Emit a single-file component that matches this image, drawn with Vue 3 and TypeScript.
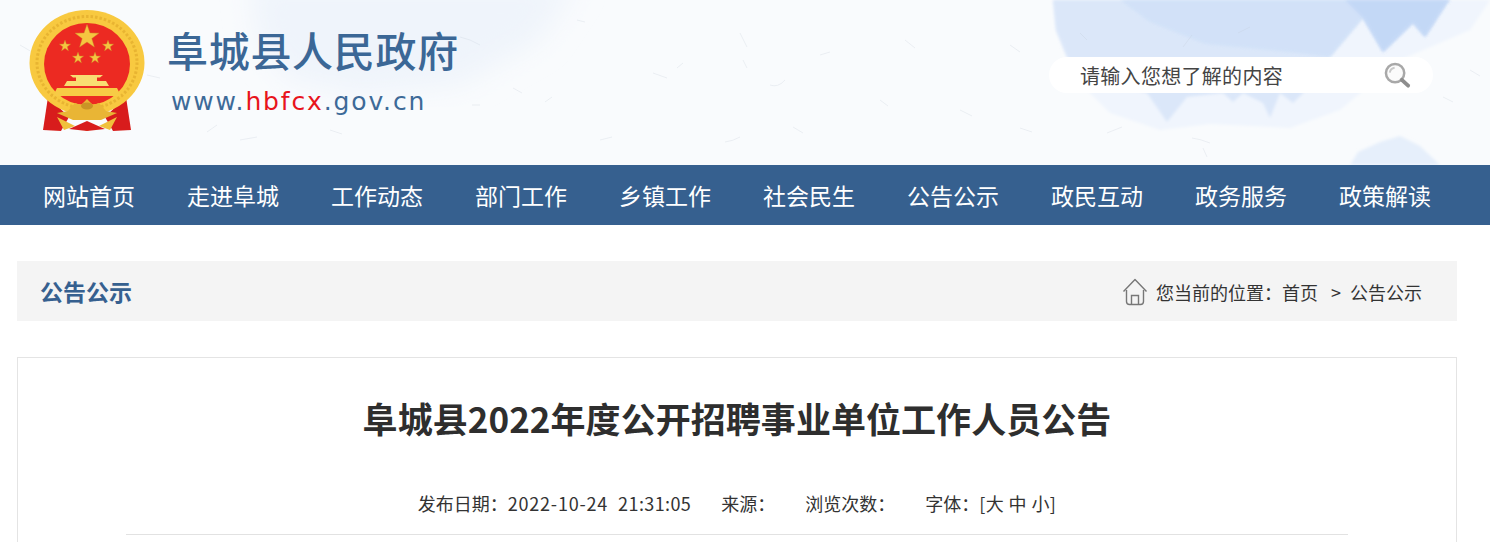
<script setup lang="ts">
const navItems = ['网站首页', '走进阜城', '工作动态', '部门工作', '乡镇工作', '社会民生', '公告公示', '政民互动', '政务服务', '政策解读']

// small gold stars of the emblem: [cx, cy, r]
const stars = [
  [58, 28, 12.5],
  [36, 37, 5.8],
  [79, 37, 5.8],
  [49, 49, 5.8],
  [66, 49, 5.8]
]

const starPoints = (cx: number, cy: number, r: number) => {
  const pts: string[] = []
  for (let i = 0; i < 10; i++) {
    const rad = i % 2 === 0 ? r : r * 0.4
    const a = -Math.PI / 2 + (i * Math.PI) / 5
    pts.push(`${(cx + rad * Math.cos(a)).toFixed(2)},${(cy + rad * Math.sin(a)).toFixed(2)}`)
  }
  return pts.join(' ')
}

// paper fibres in the header background
const fibres = [
  'M460 37 Q470 39 480 45', 'M653 73 L667 78', 'M740 33 L747 47', 'M743 60 L747 68',
  'M677 68 L683 63', 'M770 85 Q778 88 785 80', 'M793 127 L803 133', 'M725 142 Q733 141 740 137',
  'M513 88 L522 93', 'M545 102 L552 97', 'M472 105 L480 105', 'M577 20 L585 22',
  'M1080 33 L1087 40', 'M1183 47 L1192 35', 'M1192 138 Q1200 139 1210 143', 'M1203 148 L1207 157',
  'M1107 133 L1122 127', 'M1443 97 L1453 102', 'M147 75 L160 78', 'M207 132 L217 125',
  'M240 140 L257 137', 'M20 45 L32 52', 'M330 130 L342 134', 'M905 40 L915 48', 'M960 110 L972 116',
  'M1010 45 L1020 52', 'M1020 128 L1032 132', 'M1238 33 Q1244 30 1250 27', 'M1470 70 L1480 76',
  'M600 140 L612 137', 'M820 55 L830 52', 'M880 100 L888 106'
]
</script>

<template>
  <div class="page">
    <header class="header">
      <svg class="wash" viewBox="0 0 1490 165" preserveAspectRatio="none" aria-hidden="true">
        <defs>
          <filter id="soft"><feGaussianBlur stdDeviation="1.600" /></filter>
          <filter id="softest"><feGaussianBlur stdDeviation="14" /></filter>
        </defs>
        <path d="M250 -20 L258 43 L290 80 L360 95 L460 85 L540 40 L580 -20 Z" fill="#eff4fb" filter="url(#softest)" />
        <path d="M1053 0 L1056 30 L1067 57 L1085 88 L1110 113 L1160 130 L1210 124 L1290 128 L1340 110 L1400 60 L1470 30 L1490 0 Z" fill="#f0f5fd" filter="url(#soft)" />
        <path d="M1053 0 L1056 30 L1067 57 L1090 80 L1147 93 L1167 122 L1187 97 L1223 93 L1233 102 L1243 93 L1263 103 L1270 118 L1280 93 L1293 103 L1303 93 L1330 57 L1363 18 L1383 52 L1413 23 L1425 37 L1447 3 L1450 0 Z" fill="#dbe7f9" filter="url(#soft)" />
        <path d="M1120 0 L1150 22 L1205 44 L1290 52 L1330 57 L1363 18 L1383 52 L1413 23 L1425 37 L1447 3 L1450 0 Z" fill="#cfe0f8" filter="url(#soft)" opacity=".75" />
        <path d="M1345 0 L1363 18 L1383 52 L1413 23 L1425 37 L1447 3 L1450 0 Z" fill="#bfd5f6" filter="url(#soft)" opacity=".75" />
        <path d="M1358 152 L1380 142 L1400 136 L1420 146 L1440 165 L1350 165 Z" fill="#e6effb" filter="url(#soft)" />
        <path v-for="(d, i) in fibres" :key="i" :d="d" class="fibre" />
      </svg>

      <div class="brand">
        <svg class="emblem" viewBox="0 0 116 124" aria-hidden="true">
          <defs>
            <filter id="emblem-soft"><feGaussianBlur stdDeviation="0.35" /></filter>
          </defs>
          <g filter="url(#emblem-soft)">
            <path d="M19 88 L14 121 L32 122 L40 108 Z" fill="#d81f1c" />
            <path d="M97 88 L102 121 L84 122 L76 108 Z" fill="#d81f1c" />
            <path d="M28 108 L46 117 L70 117 L88 108 L81 121 L70 117 L58 122 L46 117 L35 121 Z" fill="#f0c03a" />
            <path d="M40 120 L58 112 L76 120 L58 122 Z" fill="#d81f1c" />
            <ellipse cx="58" cy="53.500" rx="57.500" ry="52.500" fill="#f8c93f" />
            <ellipse cx="58" cy="53.500" rx="50" ry="46" fill="none" stroke="#e8b432" stroke-width="3" stroke-dasharray="2.500 2" />
            <ellipse cx="58" cy="55" rx="43" ry="41" fill="#ec2b22" />
            <polygon v-for="s in stars" :key="`${s[0]}-${s[1]}`" :points="starPoints(s[0], s[1], s[2])" fill="#f5c540" stroke="#c9972b" stroke-width=".4" />
            <path d="M41 66 H74 L71 68.500 H68 V72 H77 L80 77 H35 L38 72 H47 V68.500 H44 Z" fill="#f9dd72" />
            <path d="M28 79 H88 L92 87 H24 Z" fill="#f7cb45" />
            <path d="M39 102 L46 94 L52 96 L58 90 L64 96 L70 94 L77 102 L88 104 L72 111 H44 L28 104 Z" fill="#e9b534" />
            <ellipse cx="58" cy="97" rx="6" ry="3.500" fill="#c99426" />
          </g>
        </svg>
        <div class="brand-text">
          <h1 class="site-name">阜城县人民政府</h1>
          <p class="site-url">www.<span class="red">hbfcx</span>.gov.cn</p>
        </div>
      </div>

      <div class="search">
        <span class="search-text">请输入您想了解的内容</span>
        <svg class="search-icon" viewBox="0 0 28 28" aria-hidden="true">
          <circle cx="11.500" cy="11.500" r="9.500" fill="#fbfbfb" stroke="#a8a8a8" stroke-width="2.600" />
          <path d="M6 11 A6 6 0 0 1 11 6" fill="none" stroke="#c9c9c9" stroke-width="2" />
          <path d="M18.500 18.500 L25 24.500" stroke="#8d8d8d" stroke-width="4" stroke-linecap="round" />
        </svg>
      </div>
    </header>

    <nav class="nav">
      <a v-for="item in navItems" :key="item" class="nav-item">{{ item }}</a>
    </nav>

    <section class="crumb-bar">
      <h2 class="crumb-title">公告公示</h2>
      <div class="crumbs">
        <svg class="home-icon" viewBox="0 0 26 28" aria-hidden="true">
          <path d="M1.500 13.500 L13 1.500 L24.500 13.500" fill="none" stroke="#777" stroke-width="1.400" stroke-linejoin="round" />
          <path d="M4.500 12 V23.500 Q4.500 26.500 7.500 26.500 H18.500 Q21.500 26.500 21.500 23.500 V12" fill="none" stroke="#777" stroke-width="1.400" />
          <path d="M9.500 26 V17.500 H16.500 V26" fill="none" stroke="#777" stroke-width="1.400" />
        </svg>
        <span>您当前的位置：</span><span>首页</span><span class="sep">&gt;</span><span>公告公示</span>
      </div>
    </section>

    <article class="article">
      <h3 class="article-title">阜城县2022年度公开招聘事业单位工作人员公告</h3>
      <div class="meta">
        <span>发布日期：<span class="date">2022-10-24</span><span class="time">21:31:05</span></span>
        <span>来源：</span>
        <span>浏览次数：</span>
        <span>字体：<span class="sizes">[大 中 小]</span></span>
      </div>
    </article>
  </div>
</template>

<style scoped>
.page {
  height: 542px;
  overflow: hidden;
  font-family: "Noto Sans CJK SC", "Noto Sans", sans-serif;
  color: #333;
}

.header {
  position: relative;
  height: 165px;
  background: #f9fbfd;
  display: flex;
  justify-content: space-between;
  align-items: flex-start;
  overflow: hidden;
}

.wash {
  position: absolute;
  inset: 0;
  width: 100%;
  height: 100%;
}

.fibre {
  fill: none;
  stroke: #bcc7d2;
  stroke-width: 0.7;
  opacity: 0.35;
}

.brand {
  position: relative;
  display: flex;
  padding: 9px 0 0 29px;
}

.emblem {
  width: 116px;
  height: 124px;
  display: block;
}

.brand-text {
  margin-left: 22px;
  padding-top: 14px;
}

.site-name {
  margin: 0;
  font-size: 41px;
  line-height: 52px;
  font-weight: 500;
  letter-spacing: 0.7px;
  color: #3b6796;
}

.site-url {
  margin: 12px 0 0 4px;
  font-family: "DejaVu Sans", sans-serif;
  font-size: 25px;
  line-height: 30px;
  letter-spacing: 1.85px;
  color: #3d6a98;
}

.red {
  color: #e8141c;
}

.search {
  position: relative;
  width: 384px;
  height: 36px;
  margin: 57px 57px 0 0;
  border-radius: 18px;
  background: #fff;
  display: flex;
  align-items: center;
  justify-content: space-between;
  padding: 0 22px 0 31px;
  box-sizing: border-box;
}

.search-text {
  font-size: 20px;
  letter-spacing: 0.3px;
  color: #444;
}

.search-icon {
  width: 27px;
  height: 27px;
}

.nav {
  height: 60px;
  background: #36608f;
  display: flex;
  padding-left: 43px;
  gap: 52px;
}

.nav-item {
  font-size: 23px;
  line-height: 60px;
  color: #fff;
  white-space: nowrap;
}

.crumb-bar {
  height: 60px;
  margin: 36px 33px 0 17px;
  padding: 0 35px 0 23px;
  background: #f4f4f4;
  display: flex;
  align-items: center;
  justify-content: space-between;
}

.crumb-title {
  margin: 0;
  font-size: 23px;
  font-weight: 700;
  color: #36608f;
}

.crumbs {
  display: flex;
  align-items: center;
  font-size: 18px;
  color: #333;
  padding-top: 2px;
}

.home-icon {
  width: 26px;
  height: 28px;
  margin-right: 8px;
}

.sep {
  margin: 0 9px 0 13px;
}

.article {
  margin: 36px 33px 0 17px;
  border: 1px solid #e4e4e4;
  height: 300px;
  padding: 0 108px;
  box-sizing: border-box;
}

.article-title {
  margin: 35px 0 0;
  text-align: center;
  font-size: 35px;
  line-height: 50px;
  font-weight: 700;
  letter-spacing: 0.05px;
  color: #2e2e2e;
}

.meta {
  margin-top: 45px;
  height: 46px;
  border-bottom: 1px solid #e2e2e2;
  display: flex;
  justify-content: center;
  gap: 30px;
  font-size: 18px;
  line-height: 30px;
  color: #333;
}

.date {
  letter-spacing: 0.8px;
}

.time {
  margin-left: 10px;
  letter-spacing: 0.4px;
}

.sizes {
  letter-spacing: 0.4px;
}
</style>
